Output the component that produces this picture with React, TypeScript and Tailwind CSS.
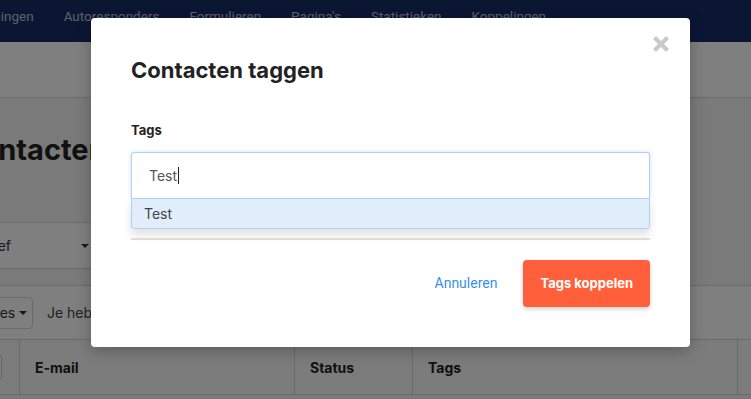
import React from "react";

const navItems = ["Mailingen", "Autoresponders", "Formulieren", "Pagina's", "Statistieken", "Koppelingen"];

export default function App() {
  return (
    <div className="relative h-[399px] w-[751px] overflow-hidden bg-[#f4f4f4] font-['Inter',sans-serif]">
      {/* Top navigation */}
      <div className="flex h-[42px] gap-[30px] bg-[#172c66] pt-[8px] font-['Roboto',sans-serif] text-[13.5px] leading-[16px] text-[#b8c1d9]">
        <span className="ml-[-25px]">{navItems[0]}</span>
        {navItems.slice(1).map((n) => (
          <span key={n}>{n}</span>
        ))}
      </div>

      {/* Sub header */}
      <div className="h-[56px] border-b border-[#d6d6d6] bg-white" />

      {/* Page content (scrolled a bit to the right) */}
      <div className="ml-[-41px]">
        <h1 className="mt-[34px] text-[29px] font-bold leading-[36px] text-[#222]">Contacten</h1>

        <div className="mt-[54px] flex h-[47px] w-[143px] items-center justify-between border border-[#d6d6d6] bg-white pl-[12px] pr-[12px] text-[14px] text-[#333]">
          <span>Actief</span>
          <span className="h-0 w-0 border-x-[4px] border-t-[4px] border-x-transparent border-t-[#333]" />
        </div>

        <div className="mt-[16px] w-[830px] border-t border-[#d6d6d6] bg-white">
          <div className="flex h-[53px] items-center gap-[14px]">
            <div className="flex h-[32px] w-[74px] items-center gap-[4px] rounded-[4px] border border-[#d6d6d6] pl-[14px] text-[14px] text-[#333]">
              <span>Acties</span>
              <span className="h-0 w-0 border-x-[4px] border-t-[4px] border-x-transparent border-t-[#333]" />
            </div>
            <span className="text-[14px] text-[#444]">Je hebt 0 contacten geselecteerd</span>
          </div>
          <div className="flex h-[56px] border-y border-[#d6d6d6] bg-[#f8f8f8] text-[14px] font-bold text-[#222]">
            <div className="flex w-[61px] shrink-0 items-center justify-end border-r border-[#d6d6d6] pr-[17px]">
              <span className="h-[26px] w-[26px] rounded-[3px] border border-[#ccc] bg-white" />
            </div>
            <div className="flex w-[275px] shrink-0 items-center border-r border-[#d6d6d6] pl-[15px]">E-mail</div>
            <div className="flex w-[118px] shrink-0 items-center border-r border-[#d6d6d6] pl-[15px]">Status</div>
            <div className="flex w-[325px] shrink-0 items-center border-r border-[#d6d6d6] pl-[15px]">Tags</div>
            <div className="flex-1" />
          </div>
        </div>
      </div>

      {/* Modal overlay */}
      <div className="absolute inset-0 bg-black/50 pl-[91px] pt-[18px]">
        <div className="relative h-[329px] w-[599px] rounded-[4px] bg-white px-[40px] pt-[38px] shadow-[0_4px_16px_rgba(0,0,0,0.25)]">
          <button className="absolute right-[20px] top-[17px]">
            <svg width="18" height="18" viewBox="0 0 18 18">
              <path d="M2.5 2.5 L15.5 15.5 M15.5 2.5 L2.5 15.5" stroke="#c9c9c9" strokeWidth="4.2" />
            </svg>
          </button>

          <h2 className="text-[22px] font-bold leading-[28px] text-[#222]">Contacten taggen</h2>

          <div className="mt-[37px] text-[13px] font-bold leading-[18px] text-[#222]">Tags</div>

          <div className="relative mt-[13px]">
            <div className="flex h-[46px] items-center rounded-t-[3px] border border-b-0 border-[#a9d1fb] pl-[17px] text-[14px] text-[#555] shadow-[0_0_4px_rgba(120,180,250,0.35)]">
              <span>Test</span>
              <span className="ml-[1px] h-[17px] w-[1px] bg-[#222]" />
            </div>
            <div className="absolute left-0 right-0 top-[46px] z-10 flex h-[31px] items-center rounded-b-[3px] border border-[#a9d1fb] bg-[#e1edfb] pl-[12px] text-[14px] text-[#444] shadow-[0_6px_10px_rgba(0,0,0,0.12)]">
              Test
            </div>
          </div>

          <div className="mt-[40px] h-[2px] bg-[#e2e2e2]" />

          <div className="mt-[20px] flex items-center justify-end gap-[26px]">
            <button className="font-['Roboto',sans-serif] text-[14px] text-[#3b8fe8]">Annuleren</button>
            <button className="h-[47px] rounded-[4px] bg-[#ff5f3b] px-[17px] text-[13px] font-bold text-white shadow-[0_2px_4px_rgba(0,0,0,0.2)]">
              Tags koppelen
            </button>
          </div>
        </div>
      </div>
    </div>
  );
}
